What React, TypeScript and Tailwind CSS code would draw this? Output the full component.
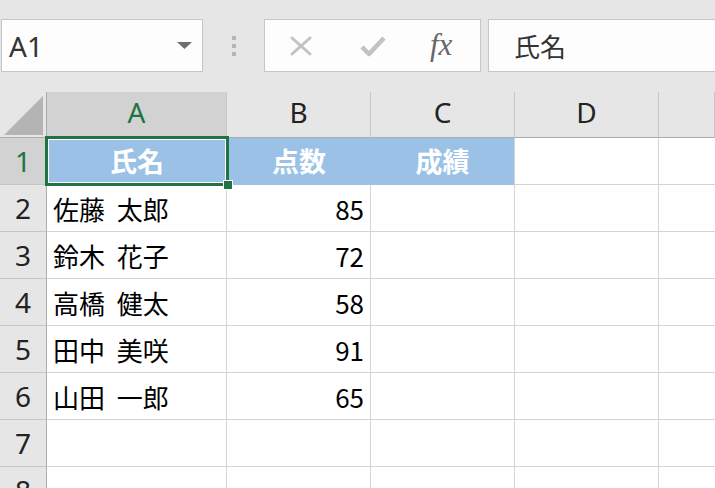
import React from 'react';

const cjk = '"Noto Sans CJK JP", "Noto Sans", sans-serif';

const rows: { name: string; score: string }[] = [
    { name: '佐藤 太郎', score: '85' },
    { name: '鈴木 花子', score: '72' },
    { name: '高橋 健太', score: '58' },
    { name: '田中 美咲', score: '91' },
    { name: '山田 一郎', score: '65' },
    { name: '', score: '' },
    { name: '', score: '' },
];

const colLetters = ['A', 'B', 'C', 'D', ''];

const Toolbar: React.FC = () => (
    <div className="h-[92px] flex items-start pt-[19px]">
        <div className="ml-[1px] w-[202px] h-[53px] border border-[#c6c6c6] bg-[#fdfdfd] flex items-center justify-between pl-[7px] pr-[10px]">
            <span className="text-[28px] text-[#333] font-['Noto_Sans'] leading-none">A1</span>
            <svg width="15" height="7" viewBox="0 0 15 7">
                <path d="M0 0 L15 0 L7.5 7 Z" fill="#6e6e6e" />
            </svg>
        </div>
        <div className="w-[61px] h-[53px] flex flex-col items-center justify-center gap-[4px]">
            <span className="w-[4px] h-[4px] bg-[#b4b4b4]" />
            <span className="w-[4px] h-[4px] bg-[#b4b4b4]" />
            <span className="w-[4px] h-[4px] bg-[#b4b4b4]" />
        </div>
        <div className="w-[217px] h-[53px] border border-[#c6c6c6] bg-[#fdfdfd] flex items-center pl-[24px]">
            <svg width="24" height="20" viewBox="0 0 24 20" className="mt-[1px]">
                <path d="M3 2 L21 18 M21 2 L3 18" stroke="#c2c2c2" strokeWidth="3" strokeLinecap="round" />
            </svg>
            <svg width="26" height="22" viewBox="0 0 26 22" className="ml-[47px]">
                <path d="M2 12 L9 19 L24 3" stroke="#c2c2c2" strokeWidth="4.5" fill="none" strokeLinejoin="round" />
            </svg>
            <span className="ml-[44px] text-[31px] italic text-[#666] font-['Liberation_Serif'] leading-none -mt-[3px]">fx</span>
        </div>
        <div className="ml-[7px] flex-1 -mr-[4px] h-[53px] border border-[#c6c6c6] bg-[#fdfdfd] flex items-center pl-[25px]">
            <span className="text-[26px] text-[#333] leading-none" style={{ fontFamily: cjk }}>氏名</span>
        </div>
    </div>
);

const App: React.FC = () => {
    return (
        <div className="w-[715px] h-[488px] overflow-hidden bg-[#e6e6e6]" style={{ fontFamily: cjk }}>
            <Toolbar />
            <div className="grid grid-cols-[47px_180px_144px_144px_144px_1fr] grid-rows-[46px_repeat(8,47px)] bg-white">
                {/* corner */}
                <div className="bg-[#e6e6e6] border-r border-b border-[#ababab] flex items-end justify-end pr-[3px] pb-[2px]">
                    <svg width="39" height="39" viewBox="0 0 39 39">
                        <path d="M39 0 L39 39 L0 39 Z" fill="#b4b4b4" />
                    </svg>
                </div>
                {colLetters.map((c, i) => (
                    <div
                        key={`h${i}`}
                        className={`border-b border-r border-b-[#ababab] border-r-[#c6c6c6] flex items-center justify-center pb-[5px] text-[28px] font-['Noto_Sans'] ${i === 0 ? 'bg-[#d2d2d2] text-[#217346]' : 'bg-[#e6e6e6] text-[#222]'}`}
                    >
                        {c}
                    </div>
                ))}

                {/* row 1 */}
                <div className="bg-[#d2d2d2] border-r border-b border-r-[#ababab] border-b-[#c6c6c6] flex items-center justify-center text-[28px] font-['Noto_Sans'] text-[#217346]">
                    1
                </div>
                <div className="relative bg-[#9bc2e6] flex items-center justify-center text-[27px] font-bold text-white">
                    氏名
                    <div className="absolute z-10 -left-[2px] -top-[2px] -right-[2px] -bottom-[1px] border-[3px] border-[#217346] pointer-events-none">
                        <div className="w-full h-full border border-white" />
                        <div className="absolute -right-[7px] -bottom-[7px] w-[10px] h-[10px] bg-[#217346] border border-white" />
                    </div>
                </div>
                <div className="bg-[#9bc2e6] flex items-center justify-center text-[27px] font-bold text-white">点数</div>
                <div className="bg-[#9bc2e6] border-r border-[#d4d4d4] flex items-center justify-center text-[27px] font-bold text-white">成績</div>
                <div className="border-r border-b border-[#d4d4d4]" />
                <div className="border-b border-[#d4d4d4]" />

                {rows.map((r, idx) => (
                    <React.Fragment key={`r${idx}`}>
                        <div className="bg-[#e6e6e6] border-r border-b border-r-[#ababab] border-b-[#c6c6c6] flex items-center justify-center text-[28px] font-['Noto_Sans'] text-[#222]">
                            {idx + 2}
                        </div>
                        <div className="border-r border-b border-[#d4d4d4] flex items-center pl-[6px] text-[26px] text-black [word-spacing:6px]">
                            {r.name}
                        </div>
                        <div className="border-r border-b border-[#d4d4d4] flex items-center justify-end pr-[6px] text-[26px] text-black">
                            {r.score}
                        </div>
                        <div className="border-r border-b border-[#d4d4d4]" />
                        <div className="border-r border-b border-[#d4d4d4]" />
                        <div className="border-b border-[#d4d4d4]" />
                    </React.Fragment>
                ))}
            </div>
        </div>
    );
};

export default App;
